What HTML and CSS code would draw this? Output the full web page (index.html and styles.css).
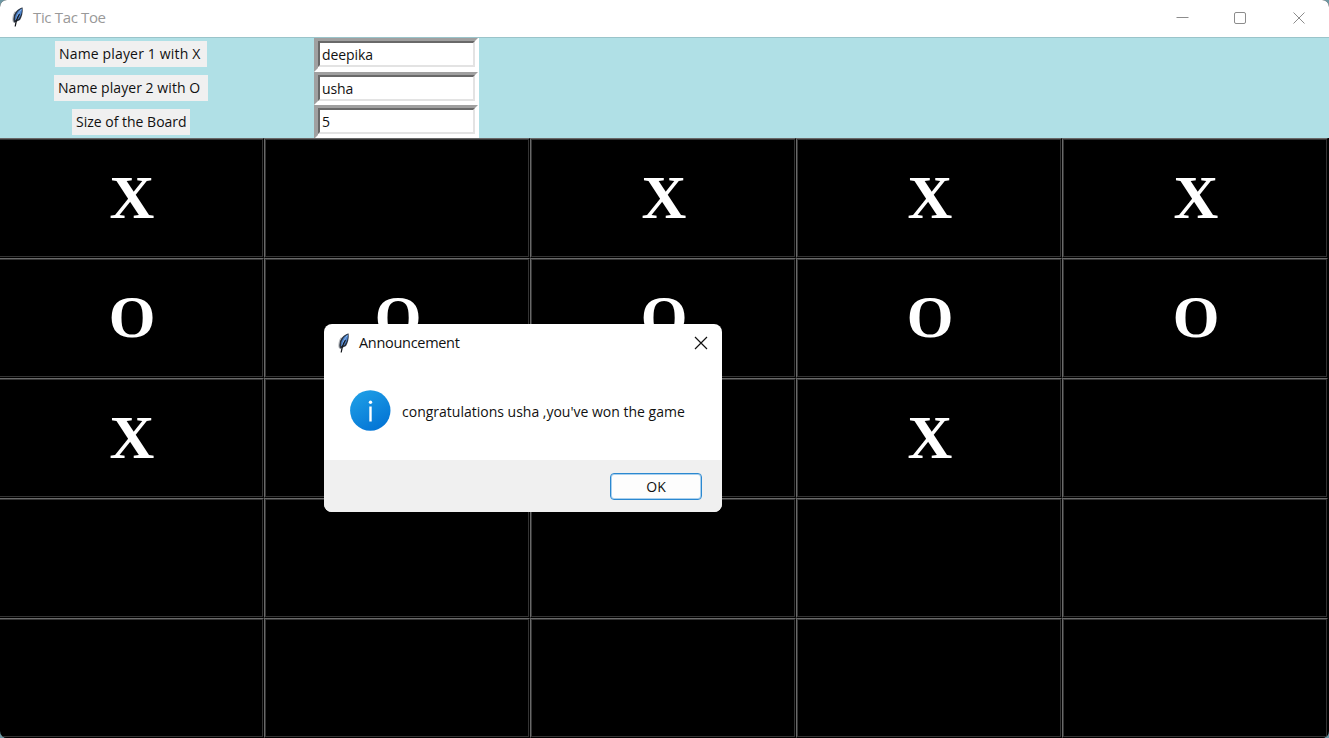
FILE: index.html
```html
<!DOCTYPE html>
<html lang="en">
<head>
<meta charset="utf-8">
<title>Tic Tac Toe</title>
<link rel="stylesheet" href="styles.css">
</head>
<body>
<svg class="defs" width="0" height="0">
  <defs>
    <linearGradient id="info" x1="0.2" y1="0" x2="0.8" y2="1"><stop offset="0" stop-color="#1f9fe6"/><stop offset="1" stop-color="#0272d4"/></linearGradient>
    <symbol id="feather" viewBox="0 0 12 20">
      <path d="M10.600.5C7 1 3 4.500 1.600 9c-.7 2.600-.6 5 .3 6.700l1.400-.4L8 13c1.800-3 3.200-7.500 2.600-12.500z" fill="#29323f"/>
      <path d="M10 1.500C7 2.600 4.200 6 3.300 9.500L3 13.300l3.800-1.500C8.800 8.500 10.300 5 10 1.500z" fill="#4b82cc"/>
      <path d="M9.300 2.500C7 5 5.300 8.500 4.600 12" fill="none" stroke="#8fb6e6" stroke-width="1"/>
      <path d="M7.500 7C5.500 10 3.800 14 3.200 19.500" fill="none" stroke="#15181d" stroke-width="1.200"/>
      <path d="M3 4.500C1.300 7.500.5 11 .9 14.500" fill="none" stroke="#a9adb3" stroke-width=".8"/>
    </symbol>
  </defs>
</svg>
<div class="window">
  <header class="titlebar">
    <svg class="feather" width="12" height="20"><use href="#feather"/></svg>
    <span class="title">Tic Tac Toe</span>
    <svg class="controls" width="138" height="14" fill="none" stroke="#8c8c8c">
      <path d="M.5 6.500h12"/>
      <rect x="58.500" y="1.500" width="11" height="11" rx="1.500"/>
      <path d="M117.500 1.500l11 11m0-11l-11 11"/>
    </svg>
  </header>
  <section class="form">
    <div class="labels">
      <span class="label l1">Name player 1 with X</span>
      <span class="label l2">Name player 2 with O</span>
      <span class="label l3">Size of the Board</span>
    </div>
    <div class="fields">
      <div class="field"><div>deepika</div></div>
      <div class="field"><div>usha</div></div>
      <div class="field"><div>5</div></div>
    </div>
  </section>
  <main class="board">
    <div class="cell">X</div><div class="cell"></div><div class="cell">X</div><div class="cell">X</div><div class="cell">X</div>
    <div class="cell o">O</div><div class="cell o">O</div><div class="cell o">O</div><div class="cell o">O</div><div class="cell o">O</div>
    <div class="cell">X</div><div class="cell"></div><div class="cell"></div><div class="cell">X</div><div class="cell"></div>
    <div class="cell"></div><div class="cell"></div><div class="cell"></div><div class="cell"></div><div class="cell"></div>
    <div class="cell"></div><div class="cell"></div><div class="cell"></div><div class="cell"></div><div class="cell"></div>
  </main>
</div>
<div class="dialog">
  <div class="dialog-title">
    <svg class="feather" width="12" height="20"><use href="#feather"/></svg>
    <span class="dialog-name">Announcement</span>
    <svg class="close" width="14" height="14" fill="none" stroke="#111" stroke-width="1.200"><path d="M1 1l12 12m0-12L1 13"/></svg>
  </div>
  <div class="dialog-body">
    <svg width="41" height="41" viewBox="0 0 41 41"><circle cx="20.300" cy="20.500" r="20.200" fill="url(#info)"/><circle cx="20.500" cy="12.300" r="1.700" fill="#fff"/><path d="M20.500 16.500v15" stroke="#fff" stroke-width="2.400"/></svg>
    <span class="message">congratulations usha ,you've won the game</span>
  </div>
  <div class="dialog-actions"><div class="ok">OK</div></div>
</div>
</body>
</html>
```
FILE: styles.css
```css
* { box-sizing: border-box; }
body {
  margin: 0;
  width: 1329px;
  height: 738px;
  overflow: hidden;
  position: relative;
  background: #6d97a3;
  font-family: "Open Sans", "Noto Sans", sans-serif;
  font-size: 14px;
  color: #111;
  white-space: nowrap;
}
.defs { position: absolute; }
.window {
  height: 738px;
  border-radius: 7px;
  overflow: hidden;
  background: #000;
}
.titlebar {
  height: 37px;
  display: flex;
  align-items: center;
  padding: 0 15px 3px 12px;
  background: #fff;
}
.title {
  margin-left: 9px;
  font-size: 15px;
  font-weight: 400;
  color: #999;
  letter-spacing: -0.35px;
}
.controls { margin-left: auto; margin-top: 1px; }
.form {
  height: 101px;
  display: flex;
  background: #b0e0e6;
  border-top: 1px solid #9ac4ca;
}
.labels {
  width: 262px;
  display: flex;
  flex-direction: column;
  align-items: center;
  gap: 8px;
  padding-top: 3px;
}
.label {
  height: 26px;
  line-height: 26px;
  background: #f0f0f0;
  padding-left: 4px;
}
.l1 { width: 152px; letter-spacing: 0.160px; }
.l2 { width: 154px; letter-spacing: 0.060px; }
.l3 { width: 118px; letter-spacing: 0; }
.fields { margin-left: 52px; width: 165px; background: #fff; }
.field {
  height: 33.600px;
  width: 164px;
  border: solid;
  border-width: 3px 3px 4px 4px;
  border-color: #a0a0a0 #fff #fff #a0a0a0;
}
.field div {
  height: 26px;
  border: 2px solid;
  border-color: #696969 #e3e3e3 #e3e3e3 #696969;
  padding-left: 2px;
  line-height: 23px;
  letter-spacing: -0.1px;
}
.board {
  display: grid;
  grid-template-columns: repeat(5, 266px);
  grid-auto-rows: 120px;
  width: 1330px;
  margin-left: -2px;
}
.cell {
  border: 1px solid;
  border-color: #696969 #000 #000 #696969;
  box-shadow: inset 1px 1px #333, inset -1px -1px #333;
  display: flex;
  align-items: center;
  justify-content: center;
  padding: 0 0 1px 2px;
  color: #fff;
  font: bold 62px "Liberation Serif", serif;
}
.o { font-size: 60px; }
.dialog {
  position: absolute;
  left: 324px;
  top: 324px;
  width: 398px;
  height: 188px;
  border-radius: 8px;
  overflow: hidden;
  background: #fff;
}
.dialog-title {
  height: 38px;
  display: flex;
  align-items: center;
  padding: 0 14px;
}
.dialog-name { margin-left: 9px; margin-top: -2px; font-size: 14.500px; letter-spacing: -0.300px; }
.close { margin-left: auto; }
.dialog-body {
  height: 98px;
  display: flex;
  align-items: center;
  padding: 0 0 1px 26px;
}
.message { margin: 2px 0 0 11px; }
.dialog-actions {
  height: 52px;
  background: #f0f0f0;
  display: flex;
  justify-content: flex-end;
  padding: 13px 20px 0 0;
}
.ok {
  width: 92px;
  height: 27px;
  border: 1px solid #2b88d0;
  box-shadow: inset 0 0 0 1px #a9d0ee;
  border-radius: 4px;
  background: #fdfdfd;
  text-align: center;
  line-height: 25px;
}
```
